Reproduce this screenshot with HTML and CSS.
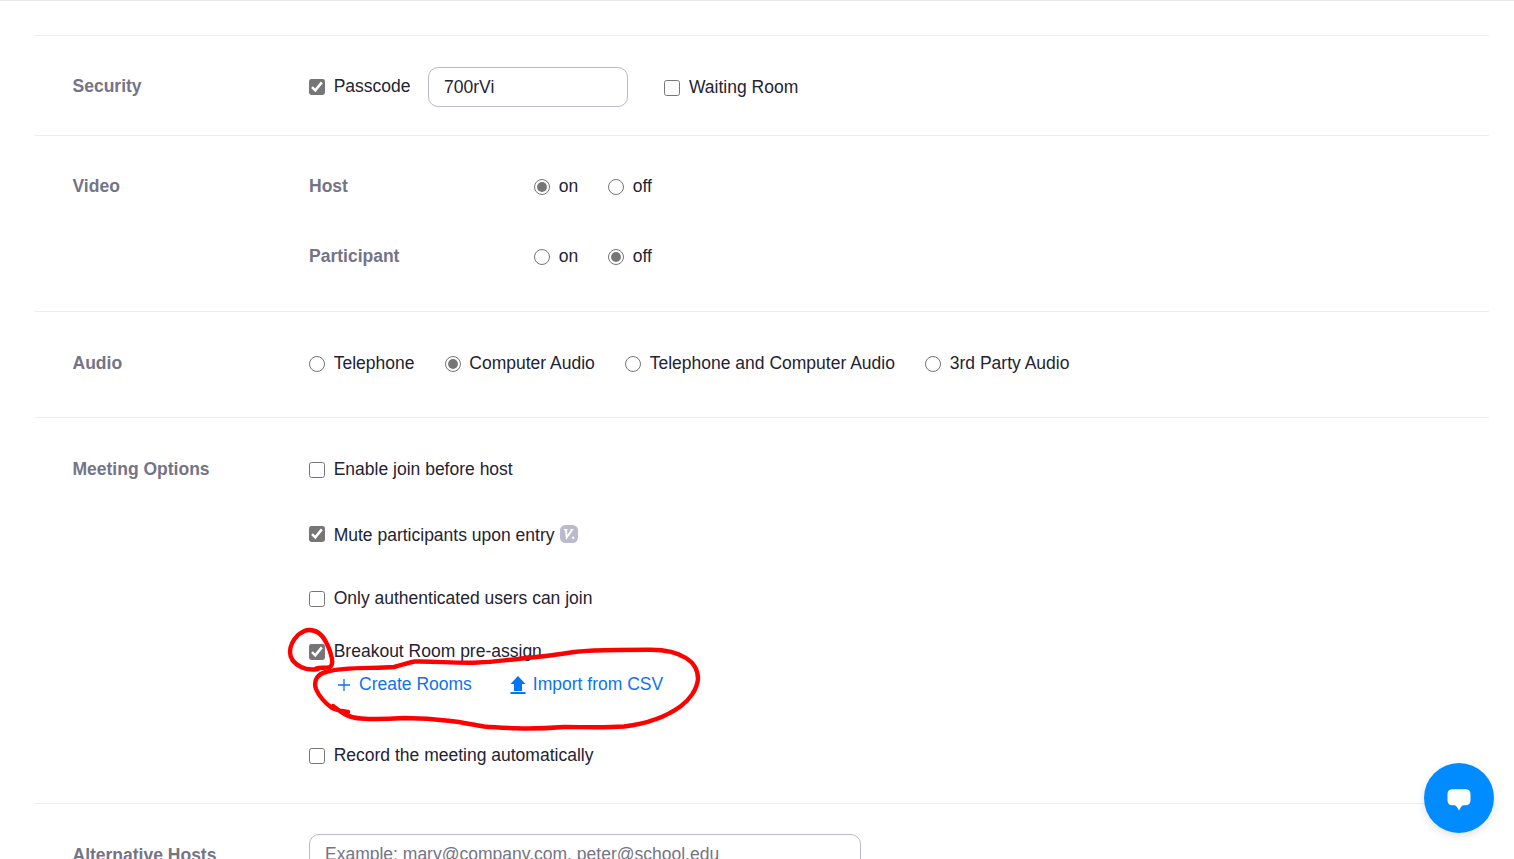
FILE: index.html
```html
<!DOCTYPE html>
<html lang="en">
<head>
<meta charset="utf-8">
<title>Schedule Meeting</title>
<link rel="stylesheet" href="styles.css">
</head>
<body>
<svg class="defs" aria-hidden="true">
  <symbol id="box" viewBox="0 0 16 16"><rect x=".5" y=".5" width="15" height="15" rx="2.2" fill="#fff" stroke="#767676"/></symbol>
  <symbol id="checked" viewBox="0 0 16 16"><rect width="16" height="16" rx="2.4" fill="#767676"/><path d="M3 8.2l3.3 3.2 6.500-8" fill="none" stroke="#fff" stroke-width="2.5"/></symbol>
  <symbol id="radio" viewBox="0 0 16 16"><circle cx="8" cy="8" r="7.5" fill="#fff" stroke="#767676"/></symbol>
  <symbol id="radio-on" viewBox="0 0 16 16"><circle cx="8" cy="8" r="7.5" fill="#fff" stroke="#767676"/><circle cx="8" cy="8" r="4.9" fill="#767676"/></symbol>
</svg>
<main class="form">
  <section class="section security">
    <h2 class="label">Security</h2>
    <div class="inline">
      <label class="option passcode"><svg class="control"><use href="#checked"/></svg>Passcode</label>
      <div class="field code">700rVi</div>
      <label class="option waiting"><svg class="control"><use href="#box"/></svg>Waiting Room</label>
    </div>
  </section>
  <section class="section video">
    <h2 class="label">Video</h2>
    <div class="rows">
      <div class="inline"><h3 class="sublabel">Host</h3><div class="radios"><label class="option"><svg class="control"><use href="#radio-on"/></svg>on</label><label class="option"><svg class="control"><use href="#radio"/></svg>off</label></div></div>
      <div class="inline"><h3 class="sublabel">Participant</h3><div class="radios"><label class="option"><svg class="control"><use href="#radio"/></svg>on</label><label class="option"><svg class="control"><use href="#radio-on"/></svg>off</label></div></div>
    </div>
  </section>
  <section class="section audio">
    <h2 class="label">Audio</h2>
    <div class="radios">
      <label class="option"><svg class="control"><use href="#radio"/></svg>Telephone</label>
      <label class="option"><svg class="control"><use href="#radio-on"/></svg>Computer Audio</label>
      <label class="option"><svg class="control"><use href="#radio"/></svg>Telephone and Computer Audio</label>
      <label class="option"><svg class="control"><use href="#radio"/></svg>3rd Party Audio</label>
    </div>
  </section>
  <section class="section meeting">
    <h2 class="label">Meeting Options</h2>
    <div class="options">
      <label class="option join"><svg class="control"><use href="#box"/></svg>Enable join before host</label>
      <label class="option mute"><svg class="control"><use href="#checked"/></svg>Mute participants upon entry
        <svg class="version" viewBox="0 0 18 18"><rect width="18" height="18" rx="5.5" fill="#babacc"/><path d="M3.800 4.700h3.700M10.300 4.700h3.200" stroke="#fff" stroke-width="1.3"/><path d="M5.900 4.700l.8 7.800 5.500-7.800" fill="none" stroke="#fff" stroke-width="1.900"/><circle cx="13.200" cy="12.800" r="1.300" fill="#fff"/></svg></label>
      <label class="option auth"><svg class="control"><use href="#box"/></svg>Only authenticated users can join</label>
      <label class="option breakout"><svg class="control"><use href="#checked"/></svg>Breakout Room pre-assign</label>
      <div class="links">
        <a class="link"><svg class="plus" viewBox="0 0 12 12"><path d="M6 0v12M0 6h12" stroke="#0e72ed" stroke-width="1.3"/></svg>Create Rooms</a>
        <a class="link import"><svg class="upload" viewBox="0 0 16 18"><path d="M8 0l7.500 8h-3.500v7H4V8H.5zM.5 16h15v2H.5z" fill="#0076f5"/></svg>Import from CSV</a>
      </div>
      <label class="option record"><svg class="control"><use href="#box"/></svg>Record the meeting automatically</label>
    </div>
  </section>
  <section class="section hosts">
    <h2 class="label">Alternative Hosts</h2>
    <div class="field emails">Example: mary@company.com, peter@school.edu</div>
  </section>
</main>
<svg class="marks" viewBox="0 0 1514 859" fill="none" stroke="#fe0000" stroke-width="4.4" stroke-linecap="round" stroke-linejoin="round">
  <path d="M316 668.500C320 667 326 668.500 330 667C333 665 332.500 659 331 655C330 650 328 646 326 642C322 634 316 630 309 630C304 630 301 633 298 635C293 640 290 646 290 652C290 659 295 664 301 667C307 670 312 670 318 669"/>
  <path d="M348 712C342 711 335 710 332 708C325 703 319 696 316 689C313 680 318 674 326 672C345 666 374 669 394 667C403 665 410 662 415 661.500C436 661 456 663.500 478 662.500C495 662 505 660 518 659C533 657 548 656 561 654L574 652C588 650.500 602 650 617 650L649 649.700C664 649.500 677 652 686 658C694 663 698 671 698 679C697 690 689 700 681 706C666 717 645 724 624 726.500C602 728 583 727 564 727C551 728 539 728.500 527 728.500C512 728 498 728 484 726.500C473 725 462 722 451 721C435 719 419 718 404 718C389 719 375 719.500 361 718.500C349 718 342 713 333 706"/>
</svg>
<button class="chat" aria-label="Chat"><svg viewBox="0 0 24 22"><path d="M5.500 .2h13q5 0 5 5v6q0 5-5 5H16Q14 17 12.800 20.200q-.8 1.800-1.600 0Q10 17 8 16.200H5.500q-5 0-5-5v-6q0-5 5-5z" fill="#fff"/></svg></button>
</body>
</html>
```
FILE: styles.css
```css
* { box-sizing: border-box; }
body {
  margin: 0;
  height: 859px;
  overflow: hidden;
  position: relative;
  border-top: 1px solid #e8e8ea;
  background: #fff;
  color: #232333;
  font: 17.5px/24px "Liberation Sans", Arial, sans-serif;
}
.defs { display: none; }
.form { margin: 34px 25px 0 35px; }
.section {
  display: flex;
  align-items: flex-start;
  border-top: 1px solid #ededf0;
  padding-left: 37.5px;
}
.label, .sublabel { margin: 0; font-size: 17.5px; line-height: 24px; color: #747487; }
.label { width: 236.5px; flex: none; }
.sublabel { width: 225px; }
.inline, .radios { display: flex; align-items: flex-start; }
.option { display: flex; align-items: flex-start; white-space: nowrap; }
.control { width: 16px; height: 16px; margin: 5px 8.7px 0 0; flex: none; }
.field { border: 1px solid #babacc; border-radius: 10px; padding: 7px 15px; white-space: nowrap; }
.security { height: 100px; padding-top: 31px; }
.security > .label, .passcode { margin-top: 7px; }
.passcode { width: 119px; }
.code { width: 200px; height: 40px; }
.waiting { margin: 8px 0 0 36px; }
.waiting .control { margin-right: 9px; }
.video { height: 176px; padding-top: 38px; }
.rows { display: grid; gap: 46px; }
.radios { gap: 30px; }
.audio { height: 106px; padding-top: 39px; }
.audio .radios { gap: 30.2px; }
.meeting { height: 386px; padding-top: 39px; }
.mute { margin-top: 42px; }
.mute .control { margin-top: 3px; }
.version { width: 18px; height: 18px; margin: 2px 0 0 5.5px; }
.auth { margin-top: 39px; }
.breakout { margin-top: 29px; }
.links { display: flex; margin: 9px 0 0 29px; gap: 38px; }
.link { display: flex; color: #0e72ed; white-space: nowrap; }
.plus { width: 12px; height: 12px; margin: 7px 9px 0 0; }
.upload { width: 16px; height: 18px; margin: 4px 7px 0 0; }
.record { margin-top: 47px; }
.hosts { padding-top: 30px; }
.hosts .label { margin-top: 9px; }
.emails { width: 552px; height: 50px; color: #747487; }
.marks { position: absolute; left: 0; top: -1px; width: 1514px; height: 859px; }
.chat {
  position: absolute;
  left: 1424px;
  top: 762px;
  width: 70px;
  height: 70px;
  display: grid;
  place-items: center;
  padding: 4px 0 0;
  border: 0;
  border-radius: 50%;
  background: #008cff;
  box-shadow: 0 3px 8px rgba(0, 0, 0, .12);
}
.chat svg { width: 24px; height: 22px; }
```
